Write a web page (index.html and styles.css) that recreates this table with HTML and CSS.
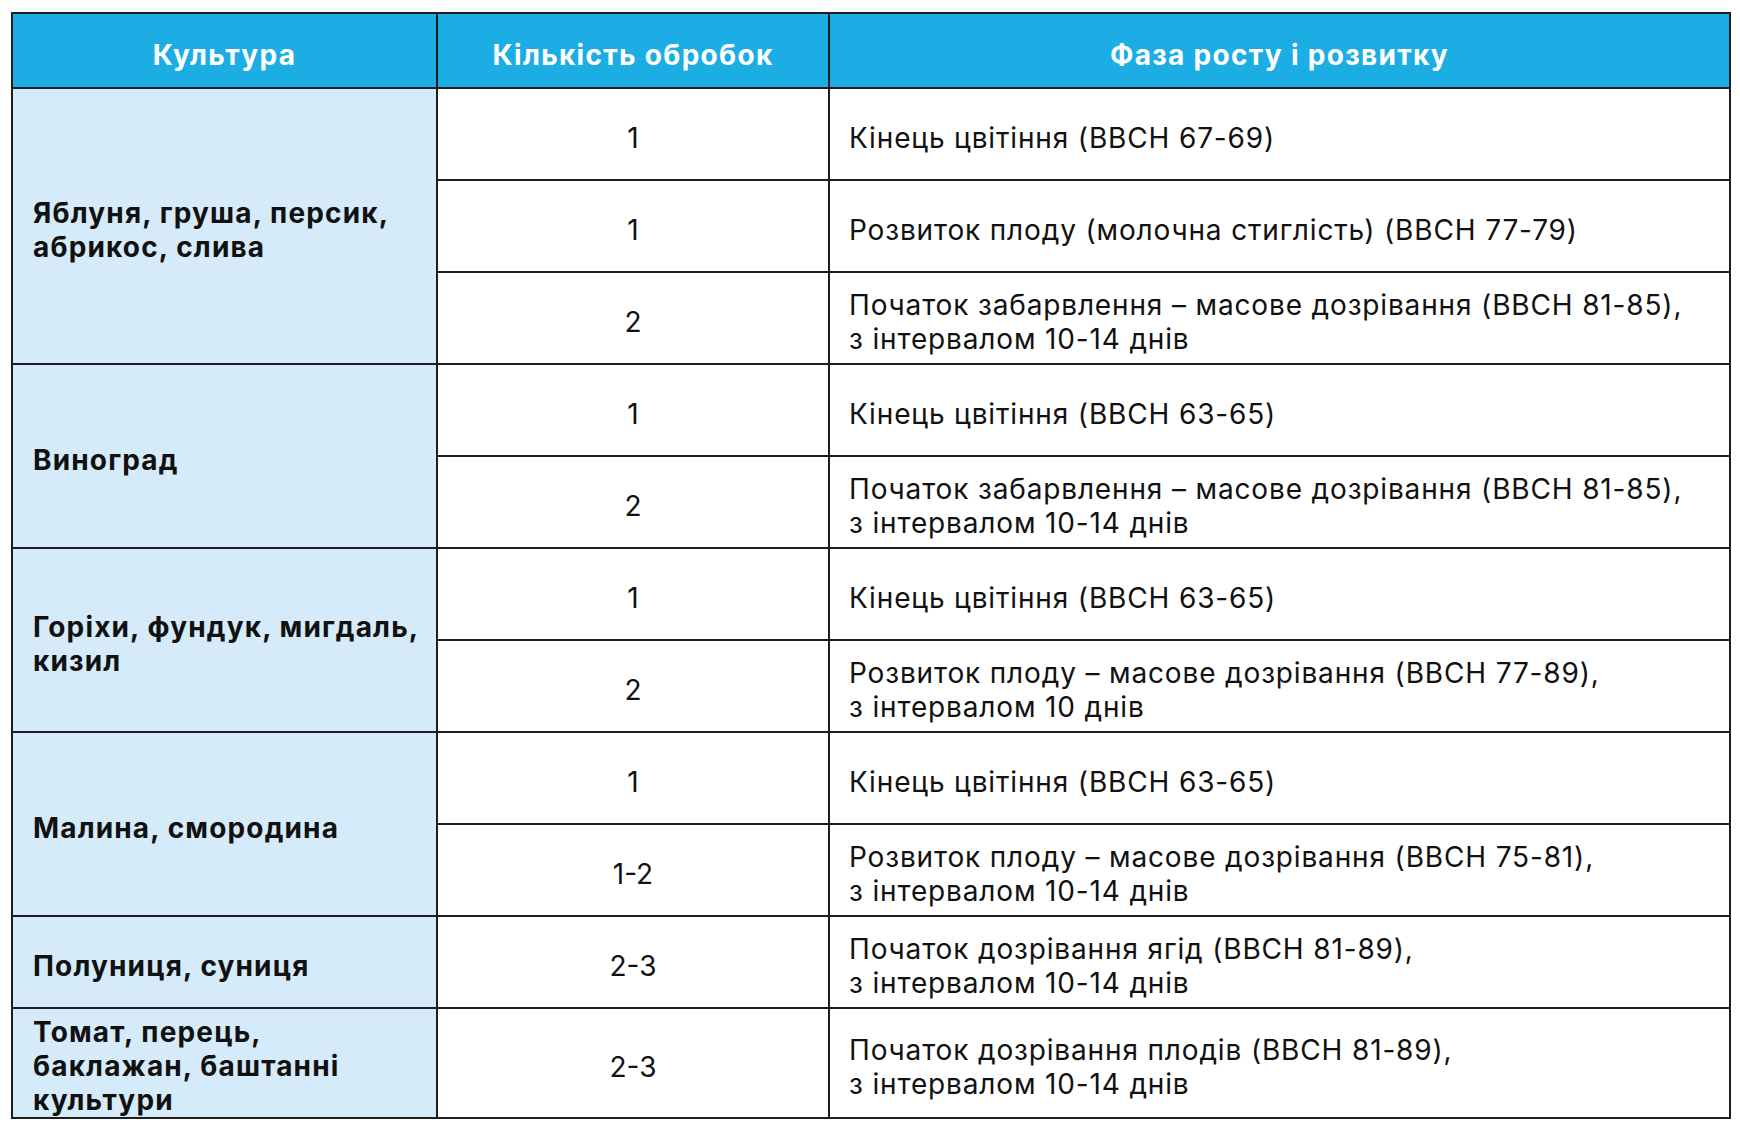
FILE: index.html
```html
<!DOCTYPE html>
<html lang="uk">
<head>
<meta charset="utf-8">
<title>Таблиця обробок</title>
<link rel="stylesheet" href="styles.css">
</head>
<body>
<table class="grid">
  <colgroup>
    <col class="c1">
    <col class="c2">
    <col class="c3">
  </colgroup>
  <thead>
    <tr class="head">
      <th>Культура</th>
      <th>Кількість обробок</th>
      <th>Фаза росту і розвитку</th>
    </tr>
  </thead>
  <tbody>
    <tr>
      <td class="crop" rowspan="3">Яблуня, груша, персик,<br>абрикос, слива</td>
      <td class="num">1</td>
      <td class="phase">Кінець цвітіння (BBCH 67-69)</td>
    </tr>
    <tr>
      <td class="num">1</td>
      <td class="phase">Розвиток плоду (молочна стиглість) (BBCH 77-79)</td>
    </tr>
    <tr>
      <td class="num">2</td>
      <td class="phase">Початок забарвлення – масове дозрівання (BBCH 81-85),<br>з інтервалом 10-14 днів</td>
    </tr>
    <tr>
      <td class="crop" rowspan="2">Виноград</td>
      <td class="num">1</td>
      <td class="phase">Кінець цвітіння (BBCH 63-65)</td>
    </tr>
    <tr>
      <td class="num">2</td>
      <td class="phase">Початок забарвлення – масове дозрівання (BBCH 81-85),<br>з інтервалом 10-14 днів</td>
    </tr>
    <tr>
      <td class="crop" rowspan="2">Горіхи, фундук, мигдаль,<br>кизил</td>
      <td class="num">1</td>
      <td class="phase">Кінець цвітіння (BBCH 63-65)</td>
    </tr>
    <tr>
      <td class="num">2</td>
      <td class="phase">Розвиток плоду – масове дозрівання (BBCH 77-89),<br>з інтервалом 10 днів</td>
    </tr>
    <tr>
      <td class="crop" rowspan="2">Малина, смородина</td>
      <td class="num">1</td>
      <td class="phase">Кінець цвітіння (BBCH 63-65)</td>
    </tr>
    <tr>
      <td class="num">1-2</td>
      <td class="phase">Розвиток плоду – масове дозрівання (BBCH 75-81),<br>з інтервалом 10-14 днів</td>
    </tr>
    <tr>
      <td class="crop">Полуниця, суниця</td>
      <td class="num">2-3</td>
      <td class="phase">Початок дозрівання ягід (BBCH 81-89),<br>з інтервалом 10-14 днів</td>
    </tr>
    <tr class="last">
      <td class="crop">Томат, перець,<br>баклажан, баштанні<br>культури</td>
      <td class="num">2-3</td>
      <td class="phase">Початок дозрівання плодів (BBCH 81-89),<br>з інтервалом 10-14 днів</td>
    </tr>
  </tbody>
</table>
</body>
</html>
```

FILE: styles.css
```css
html, body {
  margin: 0;
  padding: 0;
  background: #ffffff;
}

body {
  padding: 12px 0 0 11px;
  font-family: "Inter", "Open Sans", "DejaVu Sans", sans-serif;
  color: #111111;
}

.grid {
  border-collapse: collapse;
  table-layout: fixed;
  width: 1718px;
}

.c1 { width: 425px; }
.c2 { width: 392px; }
.c3 { width: 901px; }

.grid th,
.grid td {
  border: 2px solid #1e1e1e;
  font-size: 28px;
  line-height: 34px;
  vertical-align: middle;
  padding: 8px 20px 0 20px;
  box-sizing: border-box;
  white-space: nowrap;
}

.head th {
  height: 75px;
  background: #1badE3;
  color: #ffffff;
  font-weight: 700;
  text-align: center;
  letter-spacing: 1.3px;
}

.grid td {
  height: 92px;
  font-weight: 400;
  letter-spacing: 0.85px;
}

.grid td.crop {
  background: #d5ebfa;
  font-weight: 700;
  letter-spacing: 1.15px;
  padding-left: 20px;
}

.grid td.num {
  text-align: center;
  letter-spacing: 0;
}

.grid td.phase {
  padding-left: 19px;
}

.last td {
  height: 109px;
}

.last td.crop {
  padding-top: 6px;
  padding-bottom: 0;
  vertical-align: bottom;
}
```
